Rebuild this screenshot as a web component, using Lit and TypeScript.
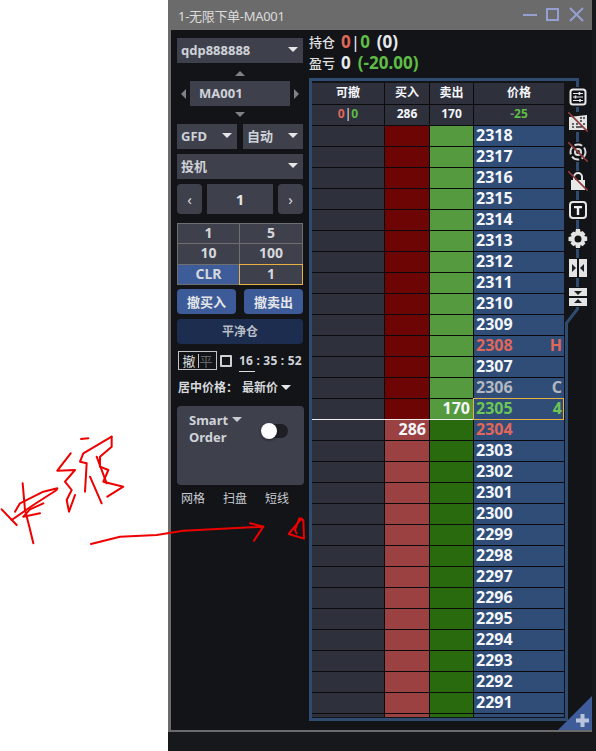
import { LitElement, html, css, svg } from "lit";
import { customElement } from "lit/decorators.js";

const ROWS: number[] = [];
for (let p = 2318; p >= 2290; p--) ROWS.push(p);

const slash = svg`<path d="M0 0 L20 20" stroke="#8a3a3a" stroke-width="1.600"/>`;

const ICONS = [
  html`<svg viewBox="0 0 20 20" class="ic first"><rect x="2.500" y="2.500" width="15" height="15" rx="2.500" fill="#111316" stroke="#e8e8e8" stroke-width="2"/><path d="M5 6.500h10M5 10h10M5 13.500h10" stroke="#e8e8e8" stroke-width="1.200"/><path d="M11.500 5v3M7.500 8.500v3M12 12v3" stroke="#e8e8e8" stroke-width="1.600"/></svg>`,
  html`<svg viewBox="0 0 20 20" class="ic second"><path d="M1 5 L19 3 V18 H1Z" fill="#e4e4e4"/><path d="M4 12h2M8 12h2M12 9h2M15 12h2M4 15h2M8 15h6M12 6h2M15 6h2" stroke="#333" stroke-width="1.400"/>${slash}</svg>`,
  html`<svg viewBox="0 0 20 20" class="ic"><circle cx="10" cy="10" r="7.500" fill="#111316" stroke="#dcdcdc" stroke-width="2" stroke-dasharray="8 2.500"/><circle cx="10" cy="10" r="3" fill="none" stroke="#dcdcdc" stroke-width="2"/>${slash}</svg>`,
  html`<svg viewBox="0 0 20 20" class="ic"><path d="M6 9V6a4 4 0 0 1 8 0v3" fill="none" stroke="#e4e4e4" stroke-width="2"/><rect x="3" y="9" width="14" height="10" fill="#e8e8e8"/>${slash}</svg>`,
  html`<svg viewBox="0 0 20 20" class="ic"><rect x="2" y="2" width="16" height="16" rx="3" fill="#111316" stroke="#e4e4e4" stroke-width="2"/><path d="M6 6h8v2.200h-2.800V15H8.800V8.200H6Z" fill="#f0f0f0"/></svg>`,
  html`<svg viewBox="0 0 20 20" class="ic"><path fill-rule="evenodd" fill="#e4e4e4" d="M8 0h4l.6 3 2-.9 2.800 2.800-1.200 2 3 .8v4l-3 .7 1.200 2.100-2.800 2.800-2-1.200-.6 3H8l-.7-3-2 1.200-2.800-2.800 1.200-2.100L.5 12V8l3.200-.8-1.200-2 2.800-2.800 2 .9ZM10 6.500a3.500 3.500 0 1 0 0 7 3.500 3.500 0 0 0 0-7Z"/></svg>`,
  html`<svg viewBox="0 0 20 20" class="ic"><path d="M1 1h8v18H1ZM11 1h8v18h-8Z" fill="#e4e4e4"/><path d="M4 6l4 4-4 4ZM16 6l-4 4 4 4Z" fill="#1c1e22"/></svg>`,
  html`<svg viewBox="0 0 20 20" class="ic"><path d="M1 1h18v8H1ZM1 11h18v8H1Z" fill="#e4e4e4"/><path d="M6 4h8l-4 4ZM6 16h8l-4-4Z" fill="#1c1e22"/></svg>`,
];

@customElement("app-root")
export class AppRoot extends LitElement {
  static styles = css`
    :host { display: block; width: 596px; height: 751px; position: relative; overflow: hidden; background: #fff;
      font-family: "Noto Sans", "Noto Sans CJK SC", sans-serif; color: #d9d9d9; }
    .desk { margin-left: 168px; width: 428px; height: 751px; background: #17181c; }
    .win { width: 424px; height: 732px; box-sizing: border-box; border-left: 3px solid #6b6b6b; border-bottom: 2px solid #6b6b6b;
      background: #121417; position: relative; display: flex; flex-direction: column; }
    .title { height: 30px; flex: none; background: #6b6b6b; display: flex; align-items: center; padding-right: 5px;
      font-size: 13px; letter-spacing: -0.3px; color: #dcdcdc; margin-left: -3px; padding-left: 10px; }
    .title span { flex: 1; }
    .title svg { display: block; }
    .body { flex: 1; display: flex; min-height: 0; }

    .left { width: 126px; margin-left: 6px; padding-top: 8px; display: flex; flex-direction: column; font-weight: 700; font-size: 13px; }
    .sel { height: 25px; box-sizing: border-box; background: #3e404c; display: flex; align-items: center; justify-content: space-between; padding: 0 5px 2px 4px; color: #cfd2d8; }
    .caret { width: 0; height: 0; border-left: 5px solid transparent; border-right: 5px solid transparent; border-top: 5px solid #e6e6e6; }
    .sym { display: grid; grid-template-columns: 13px 100px 13px; grid-template-rows: 18px 25px 18px; align-items: center; justify-items: center; }
    .sym .box { grid-column: 2; grid-row: 2; width: 100px; height: 25px; background: #3e404c; display: flex; align-items: center; padding: 0 0 2px 9px; box-sizing: border-box; color: #cfd2d8; }
    .t-up { grid-column: 2; grid-row: 1; width: 0; height: 0; border-left: 5px solid transparent; border-right: 5px solid transparent; border-bottom: 5px solid #7f818a; margin-top: 2px; }
    .t-dn { grid-column: 2; grid-row: 3; width: 0; height: 0; border-left: 5px solid transparent; border-right: 5px solid transparent; border-top: 5px solid #7f818a; margin-bottom: 2px; }
    .t-l { grid-column: 1; grid-row: 2; width: 0; height: 0; border-top: 5px solid transparent; border-bottom: 5px solid transparent; border-right: 5px solid #7f818a; }
    .t-r { grid-column: 3; grid-row: 2; width: 0; height: 0; border-top: 5px solid transparent; border-bottom: 5px solid transparent; border-left: 5px solid #7f818a; }
    .pair { display: flex; justify-content: space-between; }
    .pair .sel { width: 60px; }
    .mt5 { margin-top: 5px; }
    .step { display: flex; justify-content: space-between; margin-top: 5px; height: 30px; }
    .step div { background: #3e404c; display: flex; align-items: center; justify-content: center; }
    .step .b { width: 25px; border-radius: 4px; font-weight: 400; font-size: 15px; }
    .step .v { width: 66px; font-size: 15px; color: #e6e6e6; }
    .qty { margin-top: 9px; height: 62px; box-sizing: border-box; display: grid; grid-template-columns: 61px 1fr; grid-template-rows: 1fr 1fr 1fr; border: 1px solid #6f6f6f; background: #6f6f6f; gap: 1px; font-size: 14px; }
    .qty div { background: #3e404c; display: flex; align-items: center; justify-content: center; color: #d6d8dc; box-sizing: border-box; padding-bottom: 1px; line-height: 18px; min-height: 0; }
    .qty .clr { background: #3e5c9a; }
    .qty .on { outline: 1px solid #e7b041; }
    .btns { display: flex; justify-content: space-between; margin-top: 4px; }
    .btns div { width: 59px; height: 25px; box-sizing: border-box; padding-bottom: 1px; border-radius: 4px; background: #3d5b98; display: flex; align-items: center; justify-content: center; color: #e4e6ea; }
    .flat { margin-top: 5px; height: 25px; box-sizing: border-box; padding-bottom: 1px; border-radius: 4px; background: #1c2d4f; display: flex; align-items: center; justify-content: center; color: #b9bdc6; font-size: 12px; }
    .opts { margin-top: 7px; height: 19px; display: flex; align-items: center; }
    .tog { margin-left: 1px; width: 39px; height: 19px; box-sizing: border-box; border: 1px solid #c4c4c4; display: flex; align-items: center; justify-content: center; font-size: 13px; font-weight: 400; color: #dcdcdc; }
    .tog i { font-style: normal; padding-right: 2px; border-right: 1px solid #c4c4c4; margin-right: 1px; line-height: 14px; }
    .tog b { font-weight: 400; color: #666; }
    .chk { width: 8px; height: 8px; border: 2px solid #d0d0d0; margin-left: 3px; border-radius: 1px; }
    .time { margin-left: 7px; font-size: 12px; white-space: nowrap; color: #cfd2d8; position: relative; letter-spacing: 0.2px; }
    .time::after { content: ""; position: absolute; left: 0; bottom: -3px; width: 16px; height: 1px; background: #ddd; }
    .center { margin-top: 7px; height: 20px; display: flex; align-items: center; font-size: 12px; padding-left: 1px; white-space: nowrap; color: #d6d8dc; }
    .center .g { margin-left: 4px; }
    .center .caret { margin-left: 3px; }
    .smart { margin-top: 9px; height: 79px; width: 127px; border-radius: 4px; background: #3e404c; position: relative; padding: 6px 0 0 12px; box-sizing: border-box; line-height: 17px; color: #d0d3d8; }
    .smart .caret { display: inline-block; margin-left: 4px; vertical-align: 3px; border-top-color: #c9ccd2; }
    .switch { position: absolute; left: 84px; top: 18px; width: 27px; height: 14px; border-radius: 7px; background: #1d1f24; }
    .switch::before { content: ""; position: absolute; left: 0; top: -1px; width: 16px; height: 16px; border-radius: 50%; background: #fff; box-shadow: 0 1px 3px rgba(0,0,0,.5); }
    .tabs { margin-top: 4px; padding-left: 4px; display: flex; gap: 18px; font-size: 12px; font-weight: 400; color: #c9ccd2; height: 18px; align-items: center; }

    .right { flex: 1; position: relative; }
    .pos { position: absolute; left: 6px; top: 1px; font-weight: 700; white-space: nowrap; }
    .pos .l { display: flex; align-items: center; height: 21px; font-size: 17px; color: #e6eaf0; }
    .pos .k { font-size: 13px; margin-right: 6px; color: #e0e0e0; font-weight: 500; }
    .red { color: #e0675a; } .grn { color: #5fbd47; }
    .sep { color: #eee; font-weight: 400; }
    .sp { margin-left: 7px; }
    .frame { position: absolute; left: 0; top: 0; width: 289px; height: 700px; pointer-events: none; }
    .table { position: absolute; left: 9px; top: 53px; width: 252px; height: 634px; overflow: hidden; background: #0b0b0d; display: flex; flex-direction: column; gap: 1px; }
    .row { display: grid; grid-template-columns: 72px 44px 43px 90px; grid-template-rows: 20px; column-gap: 1px; height: 20px; flex: none; font-size: 16px; font-weight: 700; color: #f4f6fa; position: relative; }
    .row > div { display: flex; align-items: center; line-height: 18px; box-sizing: border-box; padding-bottom: 2px; min-height: 0; }
    .head > div { background: #2e303c; justify-content: center; font-size: 12px; }
    .row.h21 { height: 21px; grid-template-rows: 21px; }
    .row.h21 > div { padding-bottom: 1px; }
    .small { font-size: 12px; }
    .small .sep2 { color: #eee; font-weight: 400; }
    .dash { color: #6f8f80; }
    .row > .num-r { justify-content: flex-end; padding-right: 3px; }
    .w { background: #2e303c; }
    .bu { background: #6d0505; } .bl { background: #9b4141; }
    .su { background: #559a3f; } .sl { background: #2a6a0f; }
    .row > .p { background: #2f4d77; padding: 0 2px 2px 2px; justify-content: space-between; }
    .row > .p.gry { color: #b3b8c0; } .row > .p.gr { color: #6cc653; } .row > .p.rd { color: #e0675a; }
    .row > .cur { position: relative; z-index: 1; }
    .row > .cur::before { content: ""; position: absolute; left: -1px; top: -1px; right: 0; bottom: -1px; border: 1px solid #e7b041; }
    .mid::after { content: ""; position: absolute; left: 0; width: 161px; bottom: -1px; height: 1px; background: #f0f0f0; }
    .tools { position: absolute; left: 265px; top: 57px; display: flex; flex-direction: column; gap: 9px; width: 20px; }
    .ic { display: block; width: 20px; height: 20px; background: #121417; }
    .ic.first { margin-bottom: -4px; }
    .ic.second { margin-bottom: 1px; }
    .corner { position: absolute; right: 0; bottom: 0; display: block; }
    .ink { position: absolute; left: 0; top: 420px; width: 320px; height: 140px; pointer-events: none; }
  `;

  render() {
    return html`
      <div class="desk">
        <div class="win">
          <div class="title">
            <span>1-无限下单-MA001</span>
            <svg width="64" height="20" viewBox="0 0 64 20" fill="none" stroke="#95a0d2" stroke-width="2">
              <path d="M0 10H14"/><rect x="24" y="4" width="11" height="11"/><path d="M47 3 L60 16 M60 3 L47 16"/>
            </svg>
          </div>
          <div class="body">
            <div class="left">
              <div class="sel"><span>qdp888888</span><i class="caret"></i></div>
              <div class="sym"><i class="t-up"></i><i class="t-l"></i><div class="box">MA001</div><i class="t-r"></i><i class="t-dn"></i></div>
              <div class="pair">
                <div class="sel"><span>GFD</span><i class="caret"></i></div>
                <div class="sel"><span>自动</span><i class="caret"></i></div>
              </div>
              <div class="sel mt5"><span>投机</span><i class="caret"></i></div>
              <div class="step"><div class="b">‹</div><div class="v">1</div><div class="b">›</div></div>
              <div class="qty">
                <div>1</div><div>5</div><div>10</div><div>100</div><div class="clr">CLR</div><div class="on">1</div>
              </div>
              <div class="btns"><div>撤买入</div><div>撤卖出</div></div>
              <div class="flat">平净仓</div>
              <div class="opts">
                <div class="tog"><i>撤</i><b>平</b></div><div class="chk"></div>
                <div class="time">16 : 35 : 52</div>
              </div>
              <div class="center"><span>居中价格：</span><span class="g">最新价</span><i class="caret"></i></div>
              <div class="smart">Smart<i class="caret"></i><br />Order<div class="switch"></div></div>
              <div class="tabs"><span>网格</span><span>扫盘</span><span>短线</span></div>
            </div>
            <div class="right">
              <div class="pos">
                <div class="l"><span class="k">持仓</span><span class="red">0</span><span class="sep">|</span><span class="grn">0</span><span class="sp">(0)</span></div>
                <div class="l"><span class="k">盈亏</span><span>0</span><span class="sp grn">(-20.00)</span></div>
              </div>
              <svg class="frame" viewBox="0 0 289 700" fill="none" stroke="#2f4b70" stroke-width="3">
                <path d="M7.500 689.500 V49.500 H274.500 V279 L263.500 293 V689.500 Z"/>
              </svg>
              <div class="table">
                <div class="row head h21"><div>可撤</div><div>买入</div><div>卖出</div><div>价格</div></div>
                <div class="row head"><div class="small"><span class="red">0</span><span class="sep2">|</span><span class="grn">0</span></div><div>286</div><div>170</div><div><span class="dash">-</span><span class="grn">25</span></div></div>
                ${ROWS.map((p) => this.row(p))}
              </div>
              <div class="tools">${ICONS}</div>
            </div>
          </div>
          <svg class="corner" width="34" height="34" viewBox="0 0 34 34"><path d="M34 0V34H0Z" fill="#3e5c9a"/><path d="M22.500 18h4v4.500h4.500v4h-4.500v4.500h-4v-4.500h-4.500v-4h4.500Z" fill="#b9c4dc"/></svg>
        </div>
      </div>
      <svg class="ink" viewBox="0 0 960 420" fill="none" stroke="#ee0000" stroke-width="6" stroke-linecap="round" stroke-linejoin="round">
        <path d="M68 190 L75 270 L88 320 L100 370"/>
        <path d="M5 268 L50 315"/>
        <path d="M35 300 L100 255 L170 210 L172 205 L130 215 L60 250 L45 275"/>
        <path d="M130 250 L90 268 L70 290 L120 280"/>
        <path d="M212 100 L172 152 L225 150 L195 185 L215 210 L200 240 L207 275 L225 225"/>
        <path d="M243 57 L265 55"/>
        <path d="M335 50 L250 100 L240 125 L260 130 L255 215"/>
        <path d="M335 50 L335 80 L300 110 L300 140 L325 150 L310 185 L370 200 L322 230"/>
        <path d="M290 110 L320 190"/>
        <path d="M270 170 L305 250"/>
        <path d="M273 372 L360 350 L470 345 L550 332 L790 320 L750 310"/>
        <path d="M790 320 L762 362"/>
        <path d="M905 295 L866 342 L912 356 L910 300 L898 295 L885 330 L890 340"/>
      </svg>
    `;
  }

  private row(p: number) {
    const upper = p >= 2305;
    let cls = "p";
    if (p === 2306) cls += " gry";
    if (p === 2305) cls += " gr cur";
    if (p === 2304 || p === 2308) cls += " rd";
    const tag = p === 2308 ? "H" : p === 2306 ? "C" : p === 2305 ? "4" : "";
    return html`<div class="row ${p === 2305 ? "mid" : ""}">
      <div class="w"></div>
      <div class="num-r ${upper ? "bu" : "bl"}">${p === 2304 ? "286" : ""}</div>
      <div class="num-r ${upper ? "su" : "sl"}">${p === 2305 ? "170" : ""}</div>
      <div class="${cls}">${p > 2290 ? html`<span>${p}</span><span>${tag}</span>` : ""}</div>
    </div>`;
  }
}
